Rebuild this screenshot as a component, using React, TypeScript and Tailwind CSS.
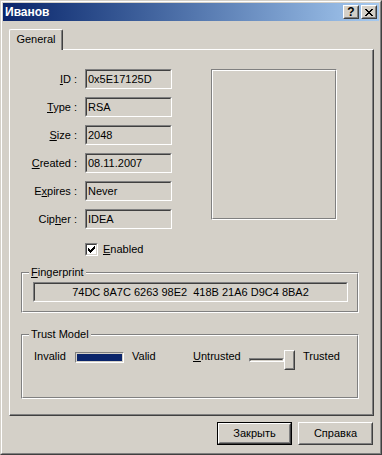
import React from "react";

function Sunken({ className = "", innerClassName = "", children }: { className?: string; innerClassName?: string; children?: React.ReactNode }) {
  return (
    <div className={"border border-t-[#808080] border-l-[#808080] border-r-white border-b-white " + className}>
      <div className={"w-full h-full border border-t-[#404040] border-l-[#404040] border-r-[#D4D0C8] border-b-[#D4D0C8] " + innerClassName}>
        {children}
      </div>
    </div>
  );
}

function Raised({ className = "", innerClassName = "", children }: { className?: string; innerClassName?: string; children?: React.ReactNode }) {
  return (
    <div className={"border border-t-white border-l-white border-r-[#404040] border-b-[#404040] bg-[#D4D0C8] " + className}>
      <div className={"w-full h-full border border-t-[#D4D0C8] border-l-[#D4D0C8] border-r-[#808080] border-b-[#808080] " + innerClassName}>
        {children}
      </div>
    </div>
  );
}

function Etched({ className = "", innerClassName = "", label, children }: { className?: string; innerClassName?: string; label?: React.ReactNode; children?: React.ReactNode }) {
  return (
    <div className={"relative border border-t-[#808080] border-l-[#808080] border-r-white border-b-white " + className}>
      <div className={"w-full h-full border border-t-white border-l-white border-r-[#808080] border-b-[#808080] " + innerClassName}>
        {children}
      </div>
      {label && (
        <span className="absolute left-[7px] top-[-7px] px-[2px] bg-[#D4D0C8] leading-[13px] whitespace-nowrap">{label}</span>
      )}
    </div>
  );
}

function Row({ label, value }: { label: React.ReactNode; value: string }) {
  return (
    <div className="flex items-center h-[20px]">
      <div className="w-[67px] text-right whitespace-nowrap">{label}</div>
      <Sunken className="ml-[8px] w-[87px] h-[20px]" innerClassName="flex items-center pl-[1px]">
        <span className="whitespace-nowrap">{value}</span>
      </Sunken>
    </div>
  );
}

function U({ children }: { children: React.ReactNode }) {
  return <span className="underline underline-offset-[1px]">{children}</span>;
}

export default function App() {
  return (
    <div className="w-[382px] h-[455px] font-['Liberation_Sans',Arial,sans-serif] text-[11px] leading-[13px] text-black select-none">
      <div className="w-full h-full border border-t-[#D4D0C8] border-l-[#D4D0C8] border-r-[#404040] border-b-[#404040]">
        <div className="w-full h-full border border-t-white border-l-white border-r-[#808080] border-b-[#808080] bg-[#D4D0C8] p-px flex flex-col">
          {/* Title bar */}
          <div className="h-[18px] shrink-0 flex items-center bg-linear-to-r from-[#0A246A] to-[#A6CAF0] pl-[2px] pr-[2px]">
            <span className="font-bold text-white text-[12px] leading-[14px]">Иванов</span>
            <div className="ml-auto flex gap-[2px]">
              <Raised className="w-[16px] h-[14px]" innerClassName="flex items-center justify-center">
                <span className="font-bold text-[12px] leading-[12px] text-black">?</span>
              </Raised>
              <Raised className="w-[16px] h-[14px]" innerClassName="flex items-center justify-center">
                <svg width="8" height="7" viewBox="0 0 8 7" shapeRendering="crispEdges">
                  <path
                    fill="#000"
                    d="M0 0h2v1h-2z M6 0h2v1h-2z M1 1h2v1h-2z M5 1h2v1h-2z M2 2h4v1h-4z M3 3h2v1h-2z M2 4h4v1h-4z M1 5h2v1h-2z M5 5h2v1h-2z M0 6h2v1h-2z M6 6h2v1h-2z"
                  />
                </svg>
              </Raised>
            </div>
          </div>

          {/* Body */}
          <div className="flex-1 pt-[8px] pl-[6px] pr-[5px] flex flex-col">
            {/* Tab */}
            <div className="relative z-10 w-[54px] h-[21px] -mb-px bg-[#D4D0C8] border-t border-l border-r border-t-white border-l-white border-r-[#404040] rounded-tl-[2px] rounded-tr-[2px] shadow-[inset_-1px_0_0_#808080] flex items-center justify-center pb-px">
              General
            </div>

            {/* Panel */}
            <div className="relative h-[367px] border border-t-white border-l-white border-r-[#404040] border-b-[#404040] shadow-[inset_-1px_-1px_0_#808080] pt-[19px]">
              <div className="flex items-start">
                <div className="flex flex-col">
                  <div className="flex flex-col gap-[8px]">
                    <Row label={<><U>I</U>D :</>} value="0x5E17125D" />
                    <Row label={<><U>T</U>ype :</>} value="RSA" />
                    <Row label={<><U>S</U>ize :</>} value="2048" />
                    <Row label={<><U>C</U>reated :</>} value="08.11.2007" />
                    <Row label={<>E<U>x</U>pires :</>} value="Never" />
                    <Row label={<>Cip<U>h</U>er :</>} value="IDEA" />
                  </div>
                  <div className="mt-[14px] pl-[75px] flex items-center gap-[5px] h-[13px]">
                    <Sunken className="w-[13px] h-[13px]" innerClassName="bg-white flex items-center justify-center">
                      <svg width="7" height="7" viewBox="0 0 7 7" shapeRendering="crispEdges">
                        <path
                          fill="#000"
                          d="M0 2h1v3h-1z M1 3h1v3h-1z M2 4h1v3h-1z M3 3h1v3h-1z M4 2h1v3h-1z M5 1h1v3h-1z M6 0h1v3h-1z"
                        />
                      </svg>
                    </Sunken>
                    <span><U>E</U>nabled</span>
                  </div>
                </div>
                <Etched className="ml-[39px] w-[126px] h-[151px]" />
              </div>

              {/* Fingerprint */}
              <Etched
                className="mt-[16px] ml-[11px] w-[338px] h-[41px]"
                innerClassName="pt-[8px] pl-[10px]"
                label={<><U>F</U>ingerprint</>}
              >
                <Sunken className="w-[315px] h-[20px]" innerClassName="flex items-center justify-center">
                  <span className="whitespace-pre">74DC 8A7C 6263 98E2  418B 21A6 D9C4 8BA2</span>
                </Sunken>
              </Etched>

              {/* Trust Model */}
              <Etched
                className="mt-[21px] ml-[11px] w-[338px] h-[65px]"
                innerClassName="pt-[14px] pl-[11px]"
                label="Trust Model"
              >
                <div className="flex items-start h-[20px]">
                  <span className="w-[41px] whitespace-nowrap">Invalid</span>
                  <div className="mt-[2px] w-[49px] h-[11px] border border-t-[#808080] border-l-[#808080] border-r-white border-b-white p-px">
                    <div className="w-full h-full bg-[#0A246A]" />
                  </div>
                  <span className="ml-[8px] w-[61px] whitespace-nowrap">Valid</span>
                  <span className="w-[56px] whitespace-nowrap"><U>U</U>ntrusted</span>
                  <Sunken className="mt-[8px] w-[35px] h-[4px]" />
                  <Raised className="w-[11px] h-[20px]" />
                  <span className="ml-[8px] whitespace-nowrap">Trusted</span>
                </div>
              </Etched>
            </div>

            {/* Buttons */}
            <div className="mt-[6px] flex justify-end gap-[6px] pr-px">
              <div className="w-[75px] h-[23px] border border-black">
                <Raised className="w-full h-full" innerClassName="flex items-center justify-center">
                  Закрыть
                </Raised>
              </div>
              <Raised className="w-[75px] h-[23px]" innerClassName="flex items-center justify-center">
                Справка
              </Raised>
            </div>
          </div>
        </div>
      </div>
    </div>
  );
}
